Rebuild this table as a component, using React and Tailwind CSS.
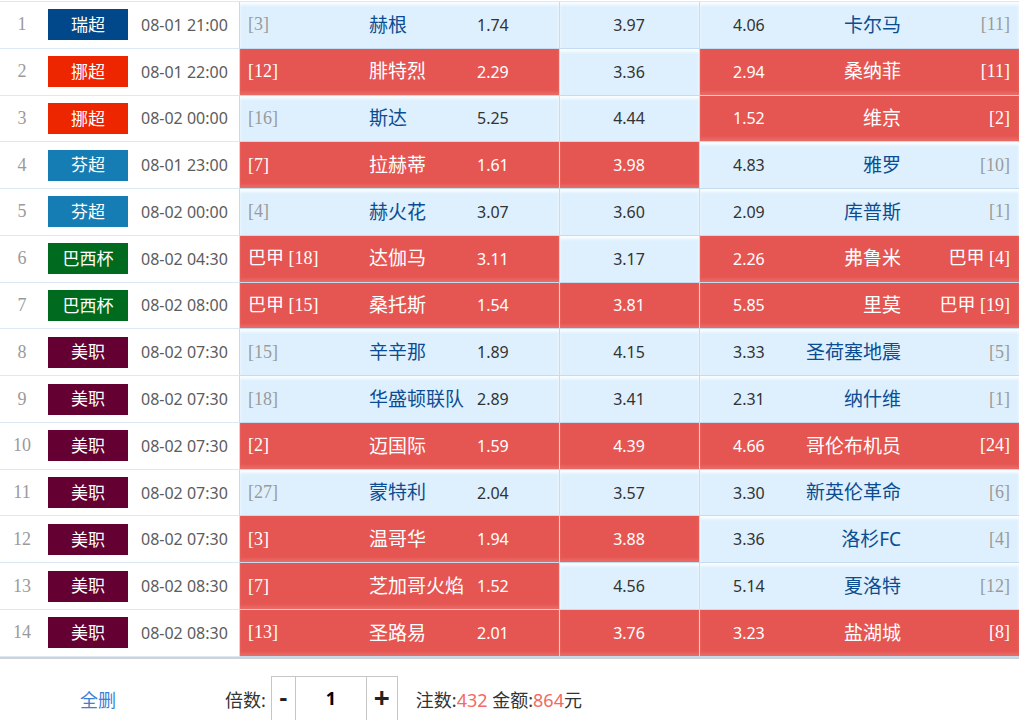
import React from "react";

const BADGE = {
  瑞超: "bg-[#00488a]",
  挪超: "bg-[#ee2600]",
  芬超: "bg-[#157db3]",
  巴西杯: "bg-[#006b1e]",
  美职: "bg-[#650033]",
};

// [no, league, time, homeRank, home, homeOdds, draw, awayOdds, away, awayRank, homeRed, drawRed, awayRed]
const rows = [
  [1, "瑞超", "08-01 21:00", "[3]", "赫根", "1.74", "3.97", "4.06", "卡尔马", "[11]", 0, 0, 0],
  [2, "挪超", "08-01 22:00", "[12]", "腓特烈", "2.29", "3.36", "2.94", "桑纳菲", "[11]", 1, 0, 1],
  [3, "挪超", "08-02 00:00", "[16]", "斯达", "5.25", "4.44", "1.52", "维京", "[2]", 0, 0, 1],
  [4, "芬超", "08-01 23:00", "[7]", "拉赫蒂", "1.61", "3.98", "4.83", "雅罗", "[10]", 1, 1, 0],
  [5, "芬超", "08-02 00:00", "[4]", "赫火花", "3.07", "3.60", "2.09", "库普斯", "[1]", 0, 0, 0],
  [6, "巴西杯", "08-02 04:30", "巴甲 [18]", "达伽马", "3.11", "3.17", "2.26", "弗鲁米", "巴甲 [4]", 1, 0, 1],
  [7, "巴西杯", "08-02 08:00", "巴甲 [15]", "桑托斯", "1.54", "3.81", "5.85", "里莫", "巴甲 [19]", 1, 1, 1],
  [8, "美职", "08-02 07:30", "[15]", "辛辛那", "1.89", "4.15", "3.33", "圣荷塞地震", "[5]", 0, 0, 0],
  [9, "美职", "08-02 07:30", "[18]", "华盛顿联队", "2.89", "3.41", "2.31", "纳什维", "[1]", 0, 0, 0],
  [10, "美职", "08-02 07:30", "[2]", "迈国际", "1.59", "4.39", "4.66", "哥伦布机员", "[24]", 1, 1, 1],
  [11, "美职", "08-02 07:30", "[27]", "蒙特利", "2.04", "3.57", "3.30", "新英伦革命", "[6]", 0, 0, 0],
  [12, "美职", "08-02 07:30", "[3]", "温哥华", "1.94", "3.88", "3.36", "洛杉FC", "[4]", 1, 1, 0],
  [13, "美职", "08-02 08:30", "[7]", "芝加哥火焰", "1.52", "4.56", "5.14", "夏洛特", "[12]", 1, 0, 0],
  [14, "美职", "08-02 08:30", "[13]", "圣路易", "2.01", "3.76", "3.23", "盐湖城", "[8]", 1, 1, 1],
];

const serif = "font-['Liberation_Serif','Noto_Sans_CJK_SC',serif]";
const cellBase = "h-full flex items-center border-r border-b border-[#c4dbf0]";
const blueCell = "bg-[#def0fd] shadow-[inset_0_3px_3px_rgba(255,255,255,0.8)]";
const redCell = "bg-[#e55652] shadow-[inset_0_-3px_3px_rgba(255,255,255,0.12)]";

function Row({ r }) {
  const [no, league, time, hr, home, ho, draw, ao, away, ar, hRed, dRed, aRed] = r;
  return (
    <div className="flex h-[46.77px]">
      <div className={`w-[44px] flex items-center justify-center border-b border-[#dce8f5] text-[18px] text-[#9a9a9a] ${serif}`}>
        {no}
      </div>
      <div className="w-[84px] pl-[4px] flex items-center border-b border-[#dce8f5]">
        <div className={`w-[80px] h-[31px] flex items-center justify-center text-white text-[17px] ${BADGE[league]}`}>
          {league}
        </div>
      </div>
      <div className="w-[112px] pl-[13px] flex items-center border-b border-r border-[#dce8f5] border-r-[#c4dbf0] text-[16px] text-[#5c5c5c]">
        {time}
      </div>

      <div className={`w-[320px] pl-[8px] ${cellBase} ${hRed ? redCell : blueCell}`}>
        <span className={`w-[121px] text-[18px] ${serif} ${hRed ? "text-white" : "text-[#9a9a9a]"}`}>{hr}</span>
        <span className={`w-[108px] text-[19px] whitespace-nowrap ${hRed ? "text-white" : "text-[#0c4d92]"}`}>{home}</span>
        <span className={`text-[16px] ${hRed ? "text-white" : "text-[#333]"}`}>{ho}</span>
      </div>

      <div className={`w-[140px] justify-center ${cellBase} ${dRed ? redCell : blueCell}`}>
        <span className={`text-[16px] pr-[1px] ${dRed ? "text-white" : "text-[#333]"}`}>{draw}</span>
      </div>

      <div className={`w-[319px] pl-[33px] pr-[9px] ${cellBase} border-r-0 ${aRed ? redCell : blueCell}`}>
        <span className={`w-[60px] text-[16px] ${aRed ? "text-white" : "text-[#333]"}`}>{ao}</span>
        <span className={`flex-1 text-right text-[19px] whitespace-nowrap ${aRed ? "text-white" : "text-[#0c4d92]"}`}>{away}</span>
        <span className={`w-[109px] text-right text-[18px] ${serif} ${aRed ? "text-white" : "text-[#9a9a9a]"}`}>{ar}</span>
      </div>
    </div>
  );
}

export default function App() {
  return (
    <div className="w-[1019px] h-[720px] overflow-hidden bg-white font-['Noto_Sans','Noto_Sans_CJK_SC',sans-serif]">
      <div className="mt-[1px] border-t border-[#dce8f5] border-b-2 border-b-[#d2d2d2]">
        {rows.map((r) => (
          <Row key={r[0]} r={r} />
        ))}
      </div>

      <div className="flex items-center pt-[17px] pl-[80px] text-[18px] text-[#333]">
        <span className="w-[145px] text-[#3b80d4]">全删</span>
        <span>倍数:</span>
        <div className="ml-[5px] flex h-[50px] border border-[#c6c6c6]">
          <div className="w-[24px] flex items-center justify-center border-r border-[#c6c6c6] text-[24px] font-bold text-[#222] pb-[8px]">
            -
          </div>
          <div className="w-[71px] flex items-center justify-center border-r border-[#c6c6c6] text-[18px] font-bold text-black pb-[4px]">
            1
          </div>
          <div className="w-[30px] flex items-center justify-center text-[28px] font-bold text-[#222] pb-[8px]">
            +
          </div>
        </div>
        <span className="ml-[18px]">
          注数:<span className="text-[#f26a63]">432</span> 金额:<span className="text-[#f26a63]">864</span>元
        </span>
      </div>
    </div>
  );
}
